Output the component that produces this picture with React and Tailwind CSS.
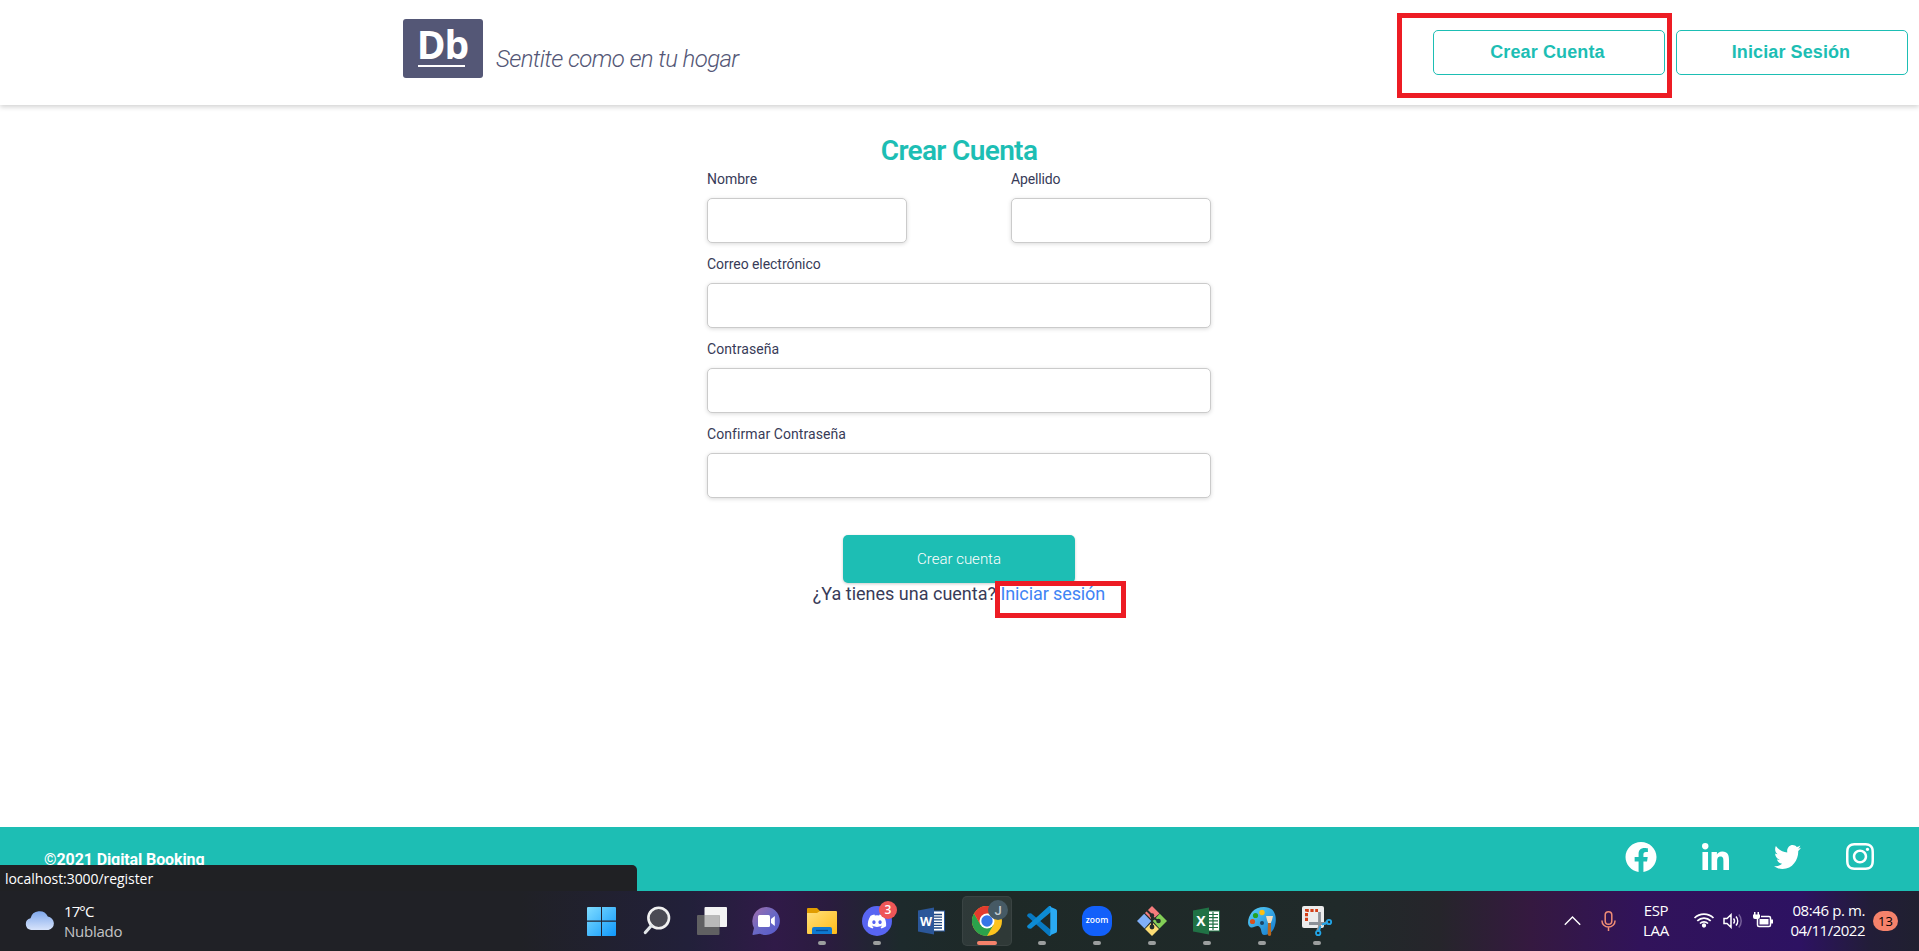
import React from "react";
import { FaDiscord, FaFacebook, FaLinkedinIn, FaTwitter, FaInstagram } from "react-icons/fa";

function Field({ label, labelClass = "", className = "w-full" }) {
  return (
    <label className={`flex flex-col ${className}`}>
      <span className={`mt-px h-[21px] text-[14px] leading-[21px] text-[#383b58] ${labelClass}`}>{label}</span>
      <input className="mt-2 h-[45px] w-full rounded-[5px] border border-[#cbcbcb] bg-white px-3 shadow-[0_1px_4px_rgba(0,0,0,0.15)] outline-none" />
    </label>
  );
}

function Header() {
  return (
    <header className="relative flex h-[105px] items-start justify-between bg-white pl-[403px] pr-[11px] shadow-[0_2px_5px_rgba(0,0,0,0.18)]">
      <div className="flex pt-[19px]">
        <div className="flex h-[59px] w-20 flex-col items-center rounded-[3px] bg-[#545776] text-white">
          <span className="mt-[4px] h-[42px] pr-[1px] text-[39px] leading-[42px] font-bold tracking-[-1px] [font-family:'Open_Sans',sans-serif]">
            Db
          </span>
          <span className="mr-[3px] h-[2px] w-[47px] bg-white" />
        </div>
        <span className="ml-[13px] mt-[26px] text-[24px] leading-7 font-light tracking-[-0.6px] italic text-[#545776]">
          Sentite como en tu hogar
        </span>
      </div>
      <nav className="flex gap-[11px] pt-[30px] [font-family:'Liberation_Sans',Arial,sans-serif]">
        <button className="h-[45px] w-[232px] rounded-[5px] border border-[#1dbeb4] pr-[3px] pb-[2px] text-[18px] leading-5 font-bold tracking-[0.12px] text-[#1dbeb4]">
          Crear Cuenta
        </button>
        <button className="h-[45px] w-[232px] rounded-[5px] border border-[#1dbeb4] pr-[2px] pb-[2px] text-[18px] leading-5 font-bold tracking-[0.1px] text-[#1dbeb4]">
          Iniciar Sesión
        </button>
      </nav>
      <div className="pointer-events-none absolute left-[1397px] top-[13px] h-[85px] w-[275px] border-5 border-[#ed1c24]" />
    </header>
  );
}

function RegisterForm() {
  return (
    <main className="flex h-[722px] flex-col items-center bg-white pt-[29px] pr-px">
      <h1 className="h-[34px] text-[28px] leading-[34px] font-semibold tracking-[-0.65px] text-[#1dbeb4]">Crear Cuenta</h1>
      <form className="flex w-[504px] flex-col gap-[10px]">
        <div className="flex justify-between">
          <Field label="Nombre" className="w-[200px]" />
          <Field label="Apellido" className="w-[200px]" labelClass="tracking-[-0.15px]" />
        </div>
        <Field label="Correo electrónico" labelClass="tracking-[-0.05px]" />
        <Field label="Contraseña" labelClass="tracking-[0.08px]" />
        <Field label="Confirmar Contraseña" labelClass="tracking-[0.08px]" />
      </form>
      <button className="mt-[37px] h-12 w-[232px] shrink-0 rounded-[5px] bg-[#1dbeb4] text-[15px] font-light text-white shadow-[0_1px_3px_rgba(0,0,0,0.2)]">
        Crear cuenta
      </button>
      <p className="relative text-[18px] leading-[22px] text-[#383b58]">
        ¿Ya tienes una cuenta? <a className="tracking-[-0.1px] text-[#4084f5]">Iniciar sesión</a>
        <span className="pointer-events-none absolute -top-[2px] left-[182px] h-[37px] w-[131px] border-5 border-[#ed1c24]" />
      </p>
    </main>
  );
}

function Footer() {
  return (
    <footer className="relative flex h-16 justify-between bg-[#1dbeb4] pl-11 pr-[45px] text-white">
      <p className="pt-[22px] text-[16px] leading-[22px] font-bold tracking-[-0.1px]">©2021 Digital Booking</p>
      <div className="flex items-start pt-[15px]">
        <FaFacebook className="h-[30px] w-8" preserveAspectRatio="none" viewBox="0 8 512 494" />
        <FaLinkedinIn className="ml-[45px] mt-px h-[27px] w-[27px]" preserveAspectRatio="none" viewBox="0 0 448 448" />
        <FaTwitter className="ml-[45px] mt-[3px] h-6 w-[27px]" preserveAspectRatio="none" viewBox="0 48 512 416" />
        <FaInstagram className="ml-[45px] mt-px h-[27px] w-7" preserveAspectRatio="none" viewBox="0 32 448 448" />
      </div>
      <div className="absolute bottom-0 left-0 flex h-[26px] w-[637px] rounded-tr-[5px] bg-[#202124] pl-[5px] text-[14px] leading-[27px] tracking-[-0.06px] text-white [font-family:'Open_Sans',sans-serif]">
        localhost:3000/register
      </div>
    </footer>
  );
}

const I = "block h-[30px] w-[30px]";

const WindowsIcon = () => (
  <svg className={I} viewBox="0 0 30 30">
    <defs>
      <linearGradient id="win" x1="0" y1="0" x2="1" y2="1" gradientUnits="objectBoundingBox">
        <stop offset="0" stopColor="#7fdcff" />
        <stop offset="1" stopColor="#0f98fb" />
      </linearGradient>
    </defs>
    <path fill="url(#win)" d="M1 1H14V14.500H0V2Q0 1 1 1ZM15 1H28Q29 1 29 2V14.500H15ZM0 15.700H14V30H1Q0 30 0 29ZM15 15.700H29V29Q29 30 28 30H15Z" />
  </svg>
);
const SearchIcon = () => (
  <svg className={I} viewBox="0 0 30 30">
    <circle cx="16.700" cy="12" r="10.300" fill="#4b4b54" stroke="#f1f1f1" strokeWidth="2.600" />
    <path d="M9.500 19.500L3.300 26.500" stroke="#e1e5e8" strokeWidth="3.200" strokeLinecap="round" />
  </svg>
);
const TaskViewIcon = () => (
  <svg className={I} viewBox="0 0 30 30">
    <rect x="7.500" y="1" width="22.500" height="20" rx="1" fill="#f3f3f3" />
    <rect x="0" y="9" width="22.500" height="20" rx="1" fill="#606062" />
    <path d="M7.500 9H22.500V21H7.500Z" fill="#b9b9b9" />
  </svg>
);
const ChatIcon = () => (
  <svg className={I} viewBox="0 0 30 30">
    <defs>
      <linearGradient id="chat" x1="0" y1="0" x2="1" y2="1">
        <stop offset="0" stopColor="#a36ca8" />
        <stop offset=".5" stopColor="#6a68c4" />
        <stop offset="1" stopColor="#5558cc" />
      </linearGradient>
    </defs>
    <path fill="url(#chat)" d="M14.500 1A14 14 0 1 1 8 27.700L1.100 29Q.3 29 .5 28L2 22A14.200 14.200 0 0 1 14.500 1Z" />
    <rect x="6" y="9" width="12" height="12" rx="1.500" fill="#fff" />
    <path d="M19 13L22.800 10V20L19 17Z" fill="#fff" />
  </svg>
);
const FolderIcon = () => (
  <svg className={I} viewBox="0 0 30 30">
    <defs>
      <linearGradient id="fold" x1="0" y1="0" x2="1" y2="1">
        <stop offset="0" stopColor="#ffe07b" />
        <stop offset="1" stopColor="#ffbb18" />
      </linearGradient>
    </defs>
    <path d="M0 3Q0 2 1 2H10L13 5H29V12H0Z" fill="#e19d00" />
    <path d="M0 7H10L13 5H29Q30 5 30 6V27Q30 28 29 28H1Q0 28 0 27Z" fill="url(#fold)" />
    <path d="M5 28V23Q5 21 7 21H23Q25 21 25 23V28Z" fill="#0f79d0" />
    <path d="M9 24.500H21" stroke="#064b91" strokeWidth="1.300" />
  </svg>
);
const DiscordIcon = () => (
  <div className="relative flex h-[30px] w-[30px] items-center justify-center rounded-full bg-[#5865f2]">
    <FaDiscord className="h-[19px] w-[20px] text-white" />
    <span className="absolute -right-[5px] -top-[5px] flex h-[18px] w-[18px] items-center justify-center rounded-full bg-[#ef5657] text-[12px] leading-none font-semibold text-white">
      3
    </span>
  </div>
);
const WordIcon = () => (
  <svg className={I} viewBox="0 0 30 30">
    <rect x="15" y="5" width="12.500" height="20" fill="#fff" stroke="#2b579a" />
    <path d="M16 8.500H25M16 11.200H25M16 13.900H25M16 16.600H25M16 19.300H25M16 22H25" stroke="#1e4681" strokeWidth="1.300" />
    <path d="M1 4.500L17 1.500V28.500L1 25.500Z" fill="#2b579a" />
    <text x="9" y="19.500" textAnchor="middle" fontSize="12.500" fontWeight="700" fill="#fff" fontFamily="Open Sans, sans-serif">W</text>
  </svg>
);
const ChromeIcon = () => (
  <div className="relative">
    <svg className={I} viewBox="0 0 30 30">
      <circle cx="15" cy="15" r="15" fill="#fcc31e" />
      <path d="M2 7.500A15 15 0 0 0 15 30L21.500 18.700L15 15L8.500 18.700Z" fill="#2ba24c" />
      <path d="M2 7.500A15 15 0 0 1 28 7.500H15L8.500 18.700Z" fill="#e33b2e" />
      <circle cx="15" cy="15" r="7.500" fill="#fff" />
      <circle cx="15" cy="15" r="5.700" fill="#3576e8" />
    </svg>
    <span className="absolute -right-[6px] -top-[6px] flex h-5 w-5 items-center justify-center rounded-full bg-[#465a65] text-[13px] leading-none font-medium text-[#c3ccd0] [font-family:Roboto,sans-serif]">
      J
    </span>
  </div>
);
const CodeIcon = () => (
  <svg className={I} viewBox="0 0 30 30">
    <path d="M1.500 7.500L4 7.200L24 24V30Q22.500 30.500 21.500 29.500L.5 10.500Q-.3 9.500 .5 8.500Z" fill="#0879c2" />
    <path d="M1.500 22.500L4 22.800L24 6V0Q22.500-.5 21.500 .5L.5 19.500Q-.3 20.500 .5 21.500Z" fill="#0d8bd4" />
    <path d="M22 .2L29 3.200Q30 3.600 30 5V25Q30 26.400 29 26.800L22 29.800Q23.300 29 23.300 27.500V2.500Q23.300 1 22 .2Z" fill="#2aa9f2" />
  </svg>
);
const ZoomIcon = () => (
  <div className="flex h-[30px] w-[30px] items-center justify-center rounded-[12px] bg-[#1260fa] pb-[2px] text-[8.500px] leading-none font-semibold text-white [font-family:'Open_Sans',sans-serif]">
    zoom
  </div>
);
const GitIcon = () => (
  <svg className={I} viewBox="0 0 30 30">
    <path d="M15 0L22.500 7.500L15 14L8 7Z" fill="#f57c7c" />
    <path d="M7.200 7.800L14.200 15L7.500 22.500L0 15Z" fill="#80aff8" />
    <path d="M22.800 7.800L30 15L22.500 22.500L15.800 15Z" fill="#83cf57" />
    <path d="M15 16L22 23L15 30L8 23Z" fill="#fbdc74" />
    <path d="M10 4.500L15 9.500V21M15 11L21.500 15" fill="none" stroke="#222b2b" strokeWidth="2" />
    <circle cx="15" cy="9.500" r="2.200" fill="#222b2b" />
    <circle cx="21.500" cy="15" r="2.300" fill="#222b2b" />
    <circle cx="15" cy="21" r="2.400" fill="#222b2b" />
  </svg>
);
const ExcelIcon = () => (
  <svg className={I} viewBox="0 0 30 30">
    <rect x="15" y="5" width="12.500" height="20" fill="#fff" stroke="#207245" />
    <path d="M16 8.500H26M16 11.700H26M16 14.900H26M16 18.100H26M16 21.500H26M21 6V24" stroke="#207245" strokeWidth="1.200" />
    <path d="M1 4.500L17 1.500V28.500L1 25.500Z" fill="#207245" />
    <text x="9" y="20" textAnchor="middle" fontSize="14" fontWeight="700" fill="#fff" fontFamily="Open Sans, sans-serif">X</text>
  </svg>
);
const PaintIcon = () => (
  <svg className={I} viewBox="0 0 30 30">
    <defs>
      <linearGradient id="paint" x1="0" y1="0" x2="1" y2="1">
        <stop offset="0" stopColor="#5ad3fa" />
        <stop offset="1" stopColor="#1379cd" />
      </linearGradient>
    </defs>
    <path fill="url(#paint)" d="M17 1C26 1 30 8 28.500 17C27.500 25 22 29 17.500 29C13 29 15.500 22.500 12 20.500C9 18.800 6 23 3 21C-.5 18.500 1 11 5 6C8 2.500 12 1 17 1Z" />
    <circle cx="15" cy="6.500" r="2.700" fill="#fdc010" />
    <circle cx="8.500" cy="9.500" r="2.600" fill="#24a221" />
    <circle cx="5.500" cy="15.500" r="2.600" fill="#d8521f" />
    <circle cx="15" cy="17" r="2" fill="#1c4464" />
    <path d="M21 16H23.800L24.200 28Q24.200 30 22.500 30T20.700 28Z" fill="#b8671f" />
    <path d="M19 10H26L25 14L23.800 17H21L20 14Z" fill="#f3dfc0" />
  </svg>
);
const SnipIcon = () => (
  <svg className={I} viewBox="0 0 30 30" overflow="visible">
    <rect x="0" y="0" width="22" height="22" rx="2" fill="#ececec" />
    <path d="M4.500 15V4.500H16" fill="none" stroke="#d43f17" strokeWidth="3" strokeDasharray="3.200 1.600" />
    <path d="M17.500 6V21L15.500 25M7 17.500H22L26 16" fill="none" stroke="#8d9299" strokeWidth="2.800" />
    <circle cx="16.200" cy="27" r="2.200" fill="none" stroke="#22a5e8" strokeWidth="1.800" />
    <circle cx="27" cy="16" r="2.200" fill="none" stroke="#22a5e8" strokeWidth="1.800" />
    <path d="M18.500 20L17 25M20 18.500L25 17" stroke="#22a5e8" strokeWidth="2" />
  </svg>
);

const apps = [
  { name: "start", Icon: WindowsIcon },
  { name: "search", Icon: SearchIcon },
  { name: "tasks", Icon: TaskViewIcon },
  { name: "chat", Icon: ChatIcon },
  { name: "files", Icon: FolderIcon, open: true },
  { name: "discord", Icon: DiscordIcon, open: true },
  { name: "word", Icon: WordIcon },
  { name: "chrome", Icon: ChromeIcon, active: true },
  { name: "code", Icon: CodeIcon, open: true },
  { name: "zoom", Icon: ZoomIcon, open: true },
  { name: "git", Icon: GitIcon, open: true },
  { name: "excel", Icon: ExcelIcon, open: true },
  { name: "paint", Icon: PaintIcon, open: true },
  { name: "snip", Icon: SnipIcon, open: true },
];

function AppTile({ Icon, open, active }) {
  return (
    <div
      className={
        active
          ? "flex h-[50px] w-[50px] flex-col items-center rounded-[5px] border border-white/5 bg-white/8 pt-[9px]"
          : "flex h-[50px] w-[50px] flex-col items-center pt-[10px]"
      }
    >
      <Icon />
      {open && <span className="mt-[5px] h-1 w-2 rounded-full bg-[#9b9e9e]" />}
      {active && <span className="mt-[5px] h-1 w-5 shrink-0 rounded-full bg-[#f5826b]" />}
    </div>
  );
}

function Taskbar() {
  return (
    <div className="flex h-[60px] items-start bg-[linear-gradient(90deg,#202126_0px,#202126_520px,#22203a_690px,#301a48_775px,#2a1c3e_830px,#1d2a2c_900px,#1e2927_1000px,#202a2a_1340px,#26252b_1440px,#351940_1530px,#31135a_1640px,#2d1262_1800px,#221d38_1870px,#202030_1919px)] text-[16px] text-white [font-family:'Open_Sans',sans-serif]">
      <div className="flex w-[577px] pl-[25px]">
        <svg className="mt-5 h-[19px] w-[30px]" viewBox="0 0 30 19">
          <defs>
            <linearGradient id="cloud" x1="0" y1="0" x2="0" y2="1">
              <stop offset="0" stopColor="#7fa8ec" />
              <stop offset="1" stopColor="#d7e3fb" />
            </linearGradient>
          </defs>
          <path fill="url(#cloud)" d="M6 19A6 6 0 0 1 5.500 7.200A9.200 9.200 0 0 1 22.800 5.600A6.800 6.800 0 0 1 23.500 19Z" />
        </svg>
        <div className="ml-[9px] flex flex-col pt-[10px] text-[15px] leading-5">
          <span className="tracking-[-0.9px]">17°C</span>
          <span className="tracking-[-0.25px] text-[#c4c4c6]">Nublado</span>
        </div>
      </div>
      <div className="flex gap-[5px] pt-[5px]">
        {apps.map((app) => (
          <AppTile key={app.name} {...app} />
        ))}
      </div>
      <div className="ml-auto flex items-start pr-[21px]">
        <svg className="mt-[24px] h-[11px] w-[17px]" viewBox="0 0 17 11" fill="none" stroke="#fff" strokeWidth="1.400">
          <path d="M.8 9.700L8.500 2L16.200 9.700" />
        </svg>
        <svg className="ml-[20px] mt-5 h-5 w-[15px]" viewBox="0 0 15 20" fill="none" stroke="#f08d76" strokeWidth="1.500">
          <rect x="4.200" y=".8" width="6.600" height="12.400" rx="3.300" />
          <path d="M1 9.500V10A6.500 6 0 0 0 14 10V9.500M7.500 16V20" />
        </svg>
        <div className="ml-[25px] w-[30px] pt-[9px] text-center text-[15px] leading-5 tracking-[-0.300px]">
          ESP
          <br />
          LAA
        </div>
        <svg className="ml-[22px] mt-[21px] h-4 w-[22px]" viewBox="0 0 22 16" fill="none" stroke="#fff" strokeWidth="1.700">
          <path d="M1.500 6A13.500 13.500 0 0 1 20.500 6M4.300 8.800A9.500 9.500 0 0 1 17.700 8.800M7 11.500A5.700 5.700 0 0 1 15 11.500" />
          <circle cx="11" cy="13.500" r="1.300" fill="#fff" />
        </svg>
        <svg className="ml-[8px] mt-[22px] h-[16px] w-[20px]" viewBox="0 0 20 15" fill="none" stroke="#fff" strokeWidth="1.500">
          <path d="M1 5H4L8 1.200V13.800L4 10H1ZM10.500 5A4 4 0 0 1 10.500 10M13 3A7 7 0 0 1 13 12" />
          <path d="M15.800 1A10 10 0 0 1 15.800 14" stroke="#77619a" />
        </svg>
        <svg className="ml-[10px] mt-[21px] h-4 w-[21px]" viewBox="0 0 21 16" fill="none" stroke="#fff" strokeWidth="1.500">
          <path d="M8 4.500H16Q17.500 4.500 17.500 6V13Q17.500 14.500 16 14.500H6Q4.500 14.500 4.500 13V7" />
          <path d="M6.500 7H15.500V12.500H6.500Z" fill="#fff" stroke="none" />
          <path d="M18 7.500H20V11.500H18ZM0 2.500H7V5Q7 7 5 7H2Q0 7 0 5ZM1 0H2.500V3H1ZM4.500 0H6V3H4.500Z" fill="#fff" stroke="none" />
        </svg>
        <div className="ml-[16px] flex w-[75px] flex-col items-end whitespace-nowrap pt-[9px] text-[15px] leading-5">
          <span className="tracking-[-0.4px]">08:46 p. m.</span>
          <span className="tracking-[-0.5px]">04/11/2022</span>
        </div>
        <span className="ml-2 mt-5 flex h-5 w-[25px] items-center justify-center rounded-full bg-[#f5826b] text-[13px] leading-none text-black">
          13
        </span>
      </div>
    </div>
  );
}

export default function App() {
  return (
    <div className="flex h-[951px] w-[1919px] flex-col overflow-hidden bg-white [font-family:Roboto,sans-serif]">
      <Header />
      <RegisterForm />
      <Footer />
      <Taskbar />
    </div>
  );
}
